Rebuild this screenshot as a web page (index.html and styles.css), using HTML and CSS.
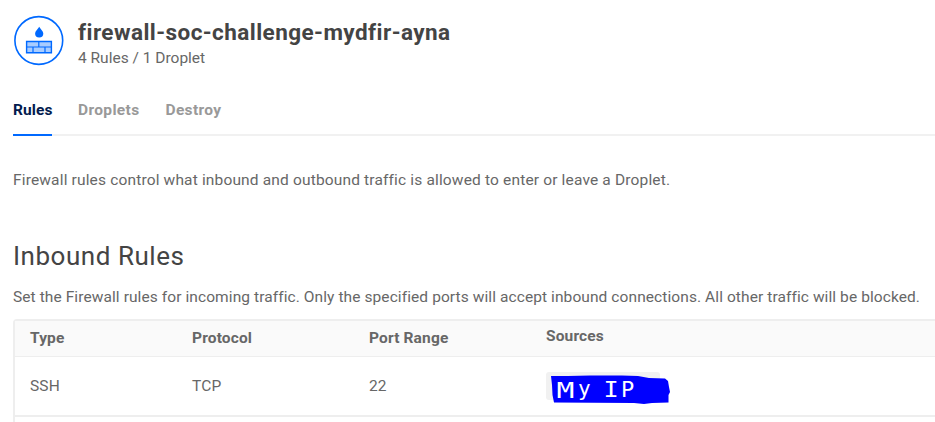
FILE: index.html
```html
<!DOCTYPE html>
<html lang="en">
<head>
<meta charset="utf-8">
<title>Firewall</title>
<link rel="stylesheet" href="styles.css">
</head>
<body>
<header class="head">
  <svg class="logo" width="50" height="51" viewBox="0 0 50 51">
    <circle cx="24.800" cy="25.500" r="23.900" fill="#fff" stroke="#0069ff" stroke-width="1.600"/>
    <path d="M25.200 11.800C26.600 14.200 29.300 16.300 29.300 18.600a4.100 3.900 0 0 1-8.200 0C21.100 16.300 23.800 14.200 25.200 11.800Z" fill="#0069ff"/>
    <path d="M12.600 26.500h24.800v11.300H12.600Z" fill="#a8ccff" stroke="#0069ff" stroke-width="1.400"/>
    <path d="M12.600 32h24.800M24.800 26.500V32M19 32v5.800M31 32v5.800" fill="none" stroke="#0069ff" stroke-width="1.200"/>
  </svg>
  <div class="names">
    <h1 class="title">firewall-soc-challenge-mydfir-ayna</h1>
    <div class="meta">4 Rules / 1 Droplet</div>
  </div>
</header>
<nav class="tabs">
  <a class="tab active">Rules</a>
  <a class="tab">Droplets</a>
  <a class="tab">Destroy</a>
</nav>
<p class="intro">Firewall rules control what inbound and outbound traffic is allowed to enter or leave a Droplet.</p>
<h2 class="section">Inbound Rules</h2>
<p class="note">Set the Firewall rules for incoming traffic. Only the specified ports will accept inbound connections. All other traffic will be blocked.</p>
<div class="table">
  <div class="row header">
    <span>Type</span><span>Protocol</span><span>Port Range</span><span class="sources">Sources</span>
  </div>
  <div class="row rule">
    <span>SSH</span><span>TCP</span><span>22</span>
    <div class="source">
      <svg width="126" height="34" viewBox="0 0 126 34">
        <rect x="0" y="2" width="114" height="28" rx="3" fill="#f1f1f1"/>
        <path d="M5 6H22L44 5.500H76L92 6L103 8L119 8.500L122 11L123 17L124 22L122.500 25V32.500L106 33L98 34L88 33L8 32.500L6.500 25L6 15Z" fill="#00f"/>
        <text class="hand" transform="translate(10.500 27.500) scale(1.350 1)">M</text>
        <text class="hand small" x="32" y="26">y</text>
        <text class="hand" transform="translate(57.500 27) scale(1.150 1)">I</text>
        <text class="hand" x="75" y="27">P</text>
      </svg>
    </div>
  </div>
</div>
</body>
</html>
```
FILE: styles.css
```css
* { box-sizing: border-box; }
html { overflow: hidden; }
body {
  margin: 0;
  height: 422px;
  overflow: hidden;
  padding: 15px 0 0 13px;
  background: #fff;
  color: #676767;
  font: 16px/20px Roboto, "Liberation Sans", sans-serif;
  white-space: nowrap;
}
h1, h2, p { margin: 0; }
.head { display: flex; height: 70px; gap: 15px; }
.logo { display: block; flex: none; margin: 0 0 0 1px; }
.names { padding-top: 3px; }
.title { font-size: 22.5px; line-height: 28px; font-weight: 700; color: #444; letter-spacing: 0.44px; margin-left: -1px; }
.meta { line-height: 20px; margin: 2px 0 0 -1px; font-size: 15.5px; }
.tabs { display: flex; gap: 26px; height: 51px; border-bottom: 2px solid #f1f1f1; }
.tab { height: 51px; padding-top: 15px; font-weight: 700; color: #999; font-size: 15.5px; letter-spacing: 0.35px; }
.active { color: #031b4e; border-bottom: 2px solid #0069ff; width: 39px; letter-spacing: 0.1px; }
.intro { margin-top: 34px; font-size: 15.5px; letter-spacing: 0.16px; }
.section { margin-top: 50px; font-size: 26px; line-height: 32px; font-weight: 400; color: #444; letter-spacing: 0.53px; }
.note { margin-top: 15px; font-size: 15.5px; letter-spacing: 0.088px; }
.table { margin-top: 12px; height: 120px; border: 2px solid #eee; border-width: 2px 0 0 2px; border-radius: 4px 0 0 0; }
.row { display: grid; grid-template-columns: 162px 177px 177px 1fr; padding-left: 15px; align-items: center; font-size: 15.5px; letter-spacing: 0.15px; }
.header { height: 36px; padding-bottom: 2px; background: #fafafa; border-bottom: 1px solid #eee; font-weight: 700; }
.sources { padding-bottom: 4px; }
.rule { height: 60px; border-bottom: 2px solid #eee; }
.source { height: 34px; padding-top: 1px; }
.source svg { display: block; }
.hand { font: 22px "DejaVu Sans Mono", monospace; letter-spacing: 0; fill: #fff; }
.small { font-size: 21px; }
```
